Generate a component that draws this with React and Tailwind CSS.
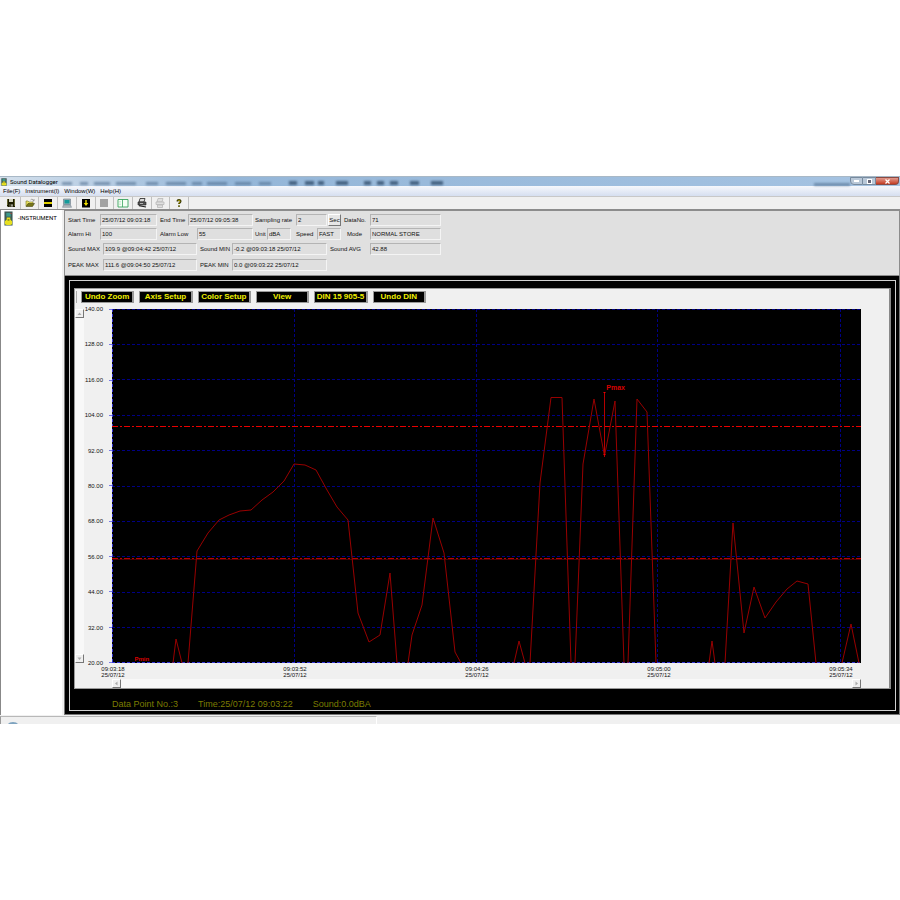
import React from "react";

const SANS = "font-['Liberation_Sans',Arial,sans-serif]";

/* ---------- toolbar icons ---------- */
function Icon({ children }) {
  return (
    <svg viewBox="0 0 12 12" className="h-3 w-3" aria-hidden="true">
      {children}
    </svg>
  );
}

const tools = [
  ["Save", <Icon key="i"><path d="M2 2h8v8H3L2 9z" fill="#1c1c00" /><path d="M4 2h4v3H4z" fill="#d4d4c0" /><path d="M2.500 2v6M9.500 2v7" stroke="#77773c" strokeWidth=".8" /><path d="M4 7h4v3H4z" fill="#44442a" /><path d="M6.500 7.500h1v2h-1z" fill="#eee" /></Icon>],
  ["Open", <Icon key="i"><path d="M2 9V4h2l1 1h4v1.500" fill="#e8e060" stroke="#77772a" strokeWidth=".6" /><path d="M2 9.500l2-3h6.500l-2 3z" fill="#77771a" stroke="#333300" strokeWidth=".5" /><path d="M6.500 3c1-1.200 2.200-1 3 .5M10 2v2H8.500" fill="none" stroke="#555" strokeWidth=".5" /></Icon>],
  ["Close", <Icon key="i"><path d="M2 2h8v8H2z" fill="#000" /><path d="M2 5h8v2H2z" fill="#e0d000" /></Icon>],
  ["Computer", <Icon key="i"><path d="M2.500 2h7v5.500h-7z" fill="#a0b4b4" stroke="#667788" strokeWidth=".6" /><path d="M3.500 3h5v3.500h-5z" fill="#149a9a" /><path d="M2.500 8h7l1 2.300h-9z" fill="#b4bcbc" stroke="#667788" strokeWidth=".5" /></Icon>],
  ["Download", <Icon key="i"><path d="M2 2h8v8.500H2z" fill="#000" /><path d="M5.300 3h1.400v3h1.600L6 9 3.700 6h1.600z" fill="#f0e000" /></Icon>],
  ["Stop", <Icon key="i"><path d="M2 2h8v8H2z" fill="#a3a3a3" /></Icon>],
  ["Split", <Icon key="i"><path d="M1 2.500h10v7.500H1z" fill="#f4fff4" stroke="#3aa45e" strokeWidth=".9" /><path d="M5.500 2.500v7.500" stroke="#3aa45e" strokeWidth=".8" /><path d="M2.500 4.500h1M2.500 6h1M2.500 7.500h1" stroke="#7cc494" strokeWidth=".6" /></Icon>],
  ["Print", <Icon key="i"><path d="M4 1.500h5L8 5H3z" fill="#ddd" stroke="#222" strokeWidth=".8" /><path d="M2 5h8v3H2z" fill="#555" stroke="#222" strokeWidth=".6" /><path d="M3 8.700l7 1.300" stroke="#222" strokeWidth="1.200" /><path d="M4 6.500h3" stroke="#ddd" strokeWidth=".7" /></Icon>],
  ["Print preview", <Icon key="i"><g stroke="#b8b8b8" strokeWidth=".8" fill="#e0e0e0"><path d="M4 1.500h5L8 5H3z" /><path d="M2 5h8v2.500H2z" /><path d="M3.500 8h5v2.500h-5z" /></g></Icon>],
  ["Help", <Icon key="i"><path d="M4.500 4.500C4.300 2.300 7.600 2.300 7.600 4.200c0 1.300-1.600 1.400-1.600 2.900" fill="none" stroke="#333300" strokeWidth="1.800" /><path d="M4.800 4C5 2.900 7.100 2.900 7.100 4.100c0 1-1.200 1.400-1.200 2.600" fill="none" stroke="#c8b800" strokeWidth=".7" /><path d="M5.200 8.300h1.600v1.700H5.200z" fill="#555500" /></Icon>],
];

function Device({ className }) {
  return (
    <svg viewBox="0 0 10 16" preserveAspectRatio="none" className={className} aria-hidden="true">
      <path d="M.5.500h9v15h-9z" fill="#3c5a55" />
      <path d="M2.500 2h5v4h-5z" fill="#3d9a8c" />
      <circle cx="7.800" cy="2.500" r=".7" fill="#d33" />
      <path d="M3 7h4v2l2 2v3l-2 1H3l-2-1v-3l2-2z" fill="#e8e020" />
      <path d="M4 8.500h2v2H4z" fill="#8a8a20" />
    </svg>
  );
}

/* ---------- information panel ---------- */
function Field({ id, label, value, labelClass, fieldClass }) {
  return (
    <>
      <label htmlFor={id} className={`shrink-0 whitespace-nowrap pt-px ${labelClass}`}>{label}</label>
      <input
        id={id}
        readOnly
        value={value}
        className={`h-3 shrink-0 border border-t-[#b4b4b4] border-l-[#b4b4b4] border-r-[#f4f4f4] border-b-[#f4f4f4] bg-[#dfdfdf] px-px pb-px outline-none ${fieldClass}`}
      />
    </>
  );
}

function InfoPanel() {
  return (
    <section className="flex h-[66px] flex-col border border-[#8c8c8c] bg-[#e0e0e0] pt-[3px] pl-[3px] text-[6px] leading-[10px] text-[#111]">
      <div className="flex h-[14px] items-start">
        <Field id="start" label="Start Time" value="25/07/12 09:03:18" labelClass="w-8" fieldClass="mr-[3px] w-[57px]" />
        <Field id="end" label="End Time" value="25/07/12 09:05:38" labelClass="w-7" fieldClass="mr-[2px] w-[65px]" />
        <Field id="rate" label="Sampling rate" value="2" labelClass="w-[41px]" fieldClass="mr-px w-[31px]" />
        <button className="mr-[3px] flex h-3 w-[13px] shrink-0 items-center justify-center border border-t-white border-l-white border-r-[#777] border-b-[#777] bg-[#e6e6e6]">Sec</button>
        <Field id="datano" label="DataNo." value="71" labelClass="w-[26px]" fieldClass="w-[71px]" />
      </div>
      <div className="flex h-[15px] items-start">
        <Field id="hi" label="Alarm Hi" value="100" labelClass="w-8" fieldClass="mr-[3px] w-[57px]" />
        <Field id="low" label="Alarm Low" value="55" labelClass="w-[37px]" fieldClass="mr-[2px] w-[56px]" />
        <Field id="unit" label="Unit" value="dBA" labelClass="w-3" fieldClass="mr-[5px] w-6" />
        <Field id="speed" label="Speed" value="FAST" labelClass="w-[21px]" fieldClass="mr-[6px] w-6" />
        <Field id="mode" label="Mode" value="NORMAL STORE" labelClass="w-[23px]" fieldClass="w-[71px]" />
      </div>
      <div className="flex h-4 items-start">
        <Field id="smax" label="Sound MAX" value="109.9 @09:04:42 25/07/12" labelClass="w-[35px]" fieldClass="mr-[3px] w-[94px]" />
        <Field id="smin" label="Sound MIN" value="-0.2 @09:03:18 25/07/12" labelClass="w-8" fieldClass="mr-[3px] w-[95px]" />
        <Field id="savg" label="Sound AVG" value="42.88" labelClass="w-10" fieldClass="w-[71px]" />
      </div>
      <div className="flex items-start">
        <Field id="pmax" label="PEAK MAX" value="111.6 @09:04:50 25/07/12" labelClass="w-[35px]" fieldClass="mr-[3px] w-[94px]" />
        <Field id="pmin" label="PEAK MIN" value="0.0 @09:03:22 25/07/12" labelClass="w-8" fieldClass="w-[95px]" />
      </div>
    </section>
  );
}

/* ---------- chart ---------- */
const traces = [
  "173,663 176,639 182,663",
  "188,663 197,551 208,533 219,520 229,515 240,511 251,510 262,500 273,492 284,481 294,464 305,465 316,470 327,490 337,507 348,520 358,613 369,642 380,635 390,573 397,663",
  "408,663 412,635 422,605 433,518 444,553 455,652 461,663",
  "514,663 519,641 525,663",
  "530,663 540,483 551,397.5 562,397.5 571,663",
  "575,663 583,464 594,399 604.5,456 615,401 624,663",
  "628,663 637,399 647,412 656,663",
  "709,663 712,641 715,663",
  "725,663 733,523 744,633 754,587 765,618 776,602 787,589 797,581 808,584 816,663",
  "842,663 851,624 859,663",
];
const yLabels = ["140.00", "128.00", "116.00", "104.00", "92.00", "80.00", "68.00", "56.00", "44.00", "32.00", "20.00"];
const xLabels = ["09:03:18", "09:03:52", "09:04:26", "09:05:00", "09:05:34"];
const gridY = [309.5, 344.5, 379.5, 415.5, 450.5, 486.5, 521.5, 556.5, 592.5, 627.5, 662.5];
const gridX = [112.5, 294.5, 476.5, 657.5, 840.5];

function Plot() {
  return (
    <div className="relative h-[354px] min-w-0 flex-1 bg-black">
      <svg viewBox="112 309 749 354" preserveAspectRatio="none" className="block h-full w-full" aria-label="Sound level over time">
        <g stroke="#000084" strokeDasharray="3 2" fill="none">
          {gridY.map((y) => <path key={y} d={`M112 ${y}H861`} />)}
          {gridX.map((x) => <path key={x} d={`M${x} 309V663`} />)}
        </g>
        <path d="M112 662.500H861M112.500 309V663" stroke="#3434d8" strokeDasharray="3 2" />
        <path d="M112 426.500H861" stroke="#e80000" strokeDasharray="6 2 2 2" />
        <path d="M112 559.500H861" stroke="#480000" />
        <path d="M112 558.500H861" stroke="#b80000" strokeDasharray="6 2 2 2" />
        <g stroke="#980000" fill="none">
          {traces.map((t) => <polyline key={t} points={t} />)}
        </g>
        <path d="M604.500 392V457" stroke="#b40000" />
        <path d="M603.500 392.500h2M603.500 454.500h2" stroke="#f00000" />
      </svg>
      <span className="absolute top-[21%] left-[66%] text-[7px] leading-[10px] font-bold text-[#d80000]">Pmax</span>
      <span className="absolute bottom-0 left-[3%] text-[6px] leading-[7px] font-bold text-[#d80000]">Pmin</span>
    </div>
  );
}

const scrollBtn =
  "flex h-[9px] w-[9px] shrink-0 items-center justify-center border border-t-white border-l-white border-r-[#777] border-b-[#777] bg-[#f0f0f0]";

function Arrow({ d, label }) {
  return (
    <button className={scrollBtn} aria-label={label}>
      <svg viewBox="0 0 5 5" className="h-[5px] w-[5px]"><path d={d} fill="#aaa" /></svg>
    </button>
  );
}

function ChartPanel() {
  return (
    <div className="border-t border-r-2 border-b border-l border-t-[#999] border-r-[#888] border-b-[#999] border-l-[#999] bg-[#f0f0f0]">
      <div className="flex h-5 items-start pt-[2px] pl-px">
        <i className="mr-1 h-3 w-px bg-[#aaa]" />
        <div className="grid w-[345px] grid-cols-6 gap-[5px]">
          {["Undo Zoom", "Axis Setup", "Color Setup", "View", "DIN 15 905-5", "Undo DIN"].map((b) => (
            <button key={b} className="h-3 border border-t-[#999] border-l-[#999] border-r-2 border-r-[#999] border-b-[#999] bg-black text-center text-[8px] leading-[10px] font-bold whitespace-nowrap text-[#f0f000]">
              {b}
            </button>
          ))}
        </div>
      </div>
      <div className="flex">
        <div className="flex w-[9px] flex-col justify-between bg-[#f8f8f8]">
          <Arrow d="M2.500 1.500L4.500 4H.5z" label="Scroll up" />
          <Arrow d="M2.500 4L4.500 1.500H.5z" label="Scroll down" />
        </div>
        <div className="-my-1 flex w-[25px] flex-col justify-between pr-[6px] text-right text-[6px] leading-[8px] text-[#111]">
          {yLabels.map((t) => <span key={t}>{t}</span>)}
        </div>
        <div className="flex w-[3px] flex-col justify-between">
          {yLabels.map((t) => <i key={t} className="h-px bg-[#7878e8]" />)}
        </div>
        <Plot />
        <div className="w-7" />
      </div>
      <div className="mr-7 ml-[26px] grid h-4 grid-cols-[182fr_182fr_182fr_182fr_32fr] pt-[3px] text-[6px] leading-[6px] text-[#111]">
        {xLabels.map((t) => (
          <div key={t} className="w-6 text-center"><div>{t}</div><div>25/07/12</div></div>
        ))}
      </div>
      <div className="mr-7 ml-[37px] flex justify-between bg-[#f8f8f8]">
        <Arrow d="M1 2.500L3.500 .5v4z" label="Scroll left" />
        <Arrow d="M4 2.500L1.500 .5v4z" label="Scroll right" />
      </div>
    </div>
  );
}

/* blurred toolbar of the window behind, seen through the glass title bar: [left margin, width] */
const ghosts = [
  [0, 10], [8, 8], [6, 16], [6, 20], [10, 12], [8, 20], [6, 10], [5, 20], [8, 16], [8, 12],
];
const darkGhosts = [[18, 8], [8, 9], [4, 6], [12, 12], [16, 7], [6, 7], [6, 8], [12, 9], [12, 12]];

/* ---------- window ---------- */
export default function App() {
  return (
    <div className={`min-h-screen bg-white pt-44 text-black ${SANS}`}>
      <main className="overflow-hidden">
        <header className="relative flex h-[10px] items-center justify-between border-t border-[#a8b8c6] bg-linear-to-r from-[#d4e0ec] via-[#94b6d8] via-25% to-[#a5c3e2]">
          <div className="absolute top-1 left-[62px] flex h-1 blur-[1px]">
            {ghosts.map(([m, w], i) => (
              <i key={i} className="h-[3px] self-end bg-[#4c6b8c] opacity-60" style={{ marginLeft: m, width: w }} />
            ))}
            {darkGhosts.map(([m, w], i) => (
              <i key={i} className="h-full bg-[#34506e] opacity-80" style={{ marginLeft: m, width: w }} />
            ))}
          </div>
          <i className="absolute right-[50px] bottom-0 h-[3px] w-9 bg-[#4c6b8c] opacity-60 blur-[1px]" />
          <div className="relative flex items-center gap-[3px] pl-px">
            <Device className="h-2 w-[6px]" />
            <h1 className="font-[Roboto,sans-serif] text-[6px] leading-[8px]">Sound Datalogger</h1>
          </div>
          <div className="relative mr-px flex h-[9px] items-start">
            <button aria-label="Minimize" className="flex h-2 w-[13px] items-center justify-center rounded-bl-sm border border-[#778a9e] bg-[#b9c8d8]"><i className="h-[2px] w-[5px] bg-white" /></button>
            <button aria-label="Restore" className="flex h-2 w-[13px] items-center justify-center border border-l-0 border-[#778a9e] bg-[#b9c8d8]"><i className="h-[5px] w-[5px] border border-white bg-[#667]" /></button>
            <button aria-label="Close" className="flex h-2 w-[23px] items-center justify-center rounded-br-sm border border-l-0 border-[#8a4a42] bg-linear-to-b from-[#e0988c] to-[#c43a20]">
              <svg viewBox="0 0 5 5" className="h-[5px] w-[5px]"><path d="M.5.5l4 4M4.500.5l-4 4" stroke="#fff" strokeWidth="1.300" /></svg>
            </button>
          </div>
        </header>
        <nav className="flex h-[10px] items-center gap-[5px] bg-linear-to-b from-[#f6f8fc] to-[#d6dff0] pl-[3px] text-[6px] leading-[8px]">
          {["File(F)", "Instrument(I)", "Window(W)", "Help(H)"].map((m) => <button key={m}>{m}</button>)}
        </nav>
        <div className="flex h-[14px] items-center border-t border-b border-t-[#c8c8c8] border-b-[#8c8c8c] bg-[#f0f0f0] pl-[2px]">
          <div className="flex w-[187px]">
            {tools.map(([name, icon]) => (
              <button key={name} aria-label={name} className="flex h-3 flex-1 items-center justify-center border-r border-[#c0c0c0]">{icon}</button>
            ))}
          </div>
        </div>
        <div className="flex">
          <aside className="flex w-16 shrink-0 items-start gap-[5px] border-r-2 border-l border-r-[#f0f0f0] border-l-[#888] bg-white pt-px pl-[3px]">
            <Device className="h-[15px] w-[9px]" />
            <span className="pt-[3px] font-[Roboto,sans-serif] text-[6px] leading-[8px]">-INSTRUMENT</span>
          </aside>
          <div className="min-w-0 flex-1">
            <InfoPanel />
            <section className="border border-t-0 border-[#777] bg-black p-1 pr-[3px] pb-[3px]">
              <div className="border border-[#d0d0d0] pt-[7px] pr-1 pl-1">
                <ChartPanel />
                <footer className="flex h-[21px] items-center gap-5 pt-2 pl-[38px] text-[9px] leading-[10px] text-[#7c7c00]">
                  <span>Data Point No.:3</span>
                  <span>Time:25/07/12 09:03:22</span>
                  <span>Sound:0.0dBA</span>
                </footer>
              </div>
            </section>
          </div>
        </div>
        <footer className="flex h-[9px] overflow-hidden bg-[#f0f0f0] pt-px">
          <div className="w-[377px] border-t border-r border-l border-t-[#b8b8b8] border-r-white border-l-[#999] pt-[5px] pl-[6px]">
            <svg viewBox="0 0 12 4" className="h-1 w-3"><path d="M0 4Q1 0 6 0T12 4z" fill="#7ea3bf" /></svg>
          </div>
        </footer>
      </main>
    </div>
  );
}
